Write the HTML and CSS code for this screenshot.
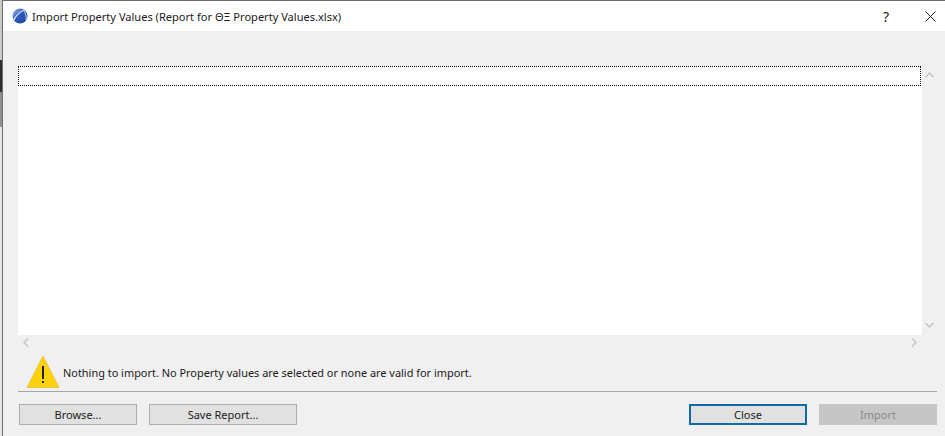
FILE: index.html
```html
<!DOCTYPE html>
<html lang="en">
<head>
<meta charset="utf-8">
<title>Import Property Values</title>
<link rel="stylesheet" href="styles.css">
</head>
<body>
<div class="screen">
  <div class="backdrop">
    <div class="bd-light"></div>
    <div class="bd-dark"></div>
    <div class="bd-mid"></div>
    <div class="bd-pale"></div>
  </div>
  <div class="dialog">
    <header class="titlebar">
      <svg class="app-icon" width="16" height="16" viewBox="0 0 16 16" aria-hidden="true">
        <defs>
          <linearGradient id="orb" x1="0" y1="0" x2="1" y2="1">
            <stop offset="0" stop-color="#a9bfe6"/>
            <stop offset="0.45" stop-color="#2c5cc0"/>
            <stop offset="1" stop-color="#1b3f96"/>
          </linearGradient>
        </defs>
        <circle cx="8" cy="8" r="7.5" fill="url(#orb)"/>
        <path d="M1.5 12.5C4 7.5 8 3.5 12 2.2" fill="none" stroke="#dfe7f6" stroke-width="1.2"/>
        <path d="M12 2.5C13.8 5.5 14.4 9 14 12" fill="none" stroke="#cfdbf2" stroke-width="1"/>
      </svg>
      <span class="title">Import Property Values (Report for ΘΞ Property Values.xlsx)</span>
      <span class="help">?</span>
      <svg class="close-x" width="11" height="11" viewBox="0 0 11 11" aria-hidden="true">
        <path d="M0.5 0.5L10.5 10.5M10.5 0.5L0.5 10.5" stroke="#222" stroke-width="1"/>
      </svg>
    </header>
    <main class="content">
      <div class="list-area">
        <div class="list-row">
          <div class="list">
            <div class="focus-row"></div>
          </div>
          <div class="vscroll">
            <svg width="9" height="6" viewBox="0 0 9 6" aria-hidden="true"><path d="M0.5 5L4.500 1L8.500 5" fill="none" stroke="#c4c4c4" stroke-width="1.4"/></svg>
            <svg width="9" height="6" viewBox="0 0 9 6" aria-hidden="true"><path d="M0.5 1L4.500 5L8.500 1" fill="none" stroke="#c4c4c4" stroke-width="1.4"/></svg>
          </div>
        </div>
        <div class="hscroll">
          <svg width="6" height="9" viewBox="0 0 6 9" aria-hidden="true"><path d="M5 0.5L1 4.500L5 8.500" fill="none" stroke="#c4c4c4" stroke-width="1.4"/></svg>
          <svg width="6" height="9" viewBox="0 0 6 9" aria-hidden="true"><path d="M1 0.5L5 4.500L1 8.500" fill="none" stroke="#c4c4c4" stroke-width="1.4"/></svg>
        </div>
      </div>
      <div class="message">
        <svg class="warn" width="34" height="33" viewBox="0 0 34 33" aria-hidden="true">
          <path d="M17 1L33 32.500H1Z" fill="#fbd20c" stroke="#e9c64a" stroke-width="1"/>
          <rect x="16" y="11" width="2" height="13" fill="#222"/>
          <rect x="16" y="26" width="2" height="2" fill="#222"/>
        </svg>
        <span class="message-text">Nothing to import. No Property values are selected or none are valid for import.</span>
      </div>
      <div class="buttons">
        <button class="btn btn-browse">Browse...</button>
        <button class="btn btn-save">Save Report...</button>
        <span class="spacer"></span>
        <button class="btn btn-close">Close</button>
        <button class="btn btn-import" disabled>Import</button>
      </div>
    </main>
  </div>
</div>
</body>
</html>
```
FILE: styles.css
```css
* { box-sizing: border-box; }
html, body { margin: 0; padding: 0; }
body { width: 945px; height: 436px; overflow: hidden; font-family: "Noto Sans", "Open Sans", sans-serif; }
.screen { display: flex; width: 945px; height: 436px; }
.backdrop { width: 3px; flex: none; display: flex; flex-direction: column; border-right: 1px solid #6e6e6e; }
.bd-light { height: 60px; background: #c9c9c9; }
.bd-dark { height: 32px; background: #2e2e2e; }
.bd-mid { height: 35px; background: #8f8f8f; }
.bd-pale { flex: 1; background: #e6e6e6; }
.dialog { flex: 1; display: flex; flex-direction: column; background: #f0f0f0; border-top: 1px solid #6d6d6d; min-width: 0; }
.titlebar { height: 30px; flex: none; background: #fff; display: flex; align-items: center; padding-left: 9px; }
.app-icon { flex: none; margin-right: 4px; }
.title { font-size: 11.07px; color: #1a1a1a; white-space: nowrap; }
.help { margin-left: auto; font-size: 14px; color: #222; width: 12px; text-align: center; }
.close-x { margin: 0 9px 0 33px; flex: none; }
.content { flex: 1; display: flex; flex-direction: column; padding: 35px 8px 11px 15px; min-height: 0; }
.list-area { display: flex; flex-direction: column; }
.list-row { display: flex; height: 269px; }
.list { width: 904px; background: #fff; }
.focus-row { height: 20px; margin-right: 1px; border: 1px dotted #111; }
.vscroll { flex: 1; display: flex; flex-direction: column; justify-content: space-between; align-items: center; padding: 6px 0 7px; }
.hscroll { height: 15px; width: 904px; display: flex; justify-content: space-between; align-items: center; padding: 0 5px; }
.message { display: flex; align-items: flex-start; height: 42px; padding: 5px 0 0 8px; border-bottom: 1px solid #a6a6a6; font-size: 10.93px; color: #1a1a1a; }
.warn { flex: none; margin-right: 3px; }
.message-text { margin-top: 10px; }
.buttons { display: flex; align-items: center; padding: 12px 0 0 1px; }
.spacer { flex: 1; }
.btn { height: 21px; width: 118px; padding: 0; font: inherit; font-size: 11px; color: #1a1a1a; background: #e1e1e1; border: 1px solid #adadad; }
.btn-browse { margin-right: 12px; }
.btn-save { width: 148px; }
.btn-close { border: 2px solid #0f6aa8; margin-right: 12px; }
.btn-import { background: #c6c6c6; border-color: #c6c6c6; color: #8a8a8a; }
```
